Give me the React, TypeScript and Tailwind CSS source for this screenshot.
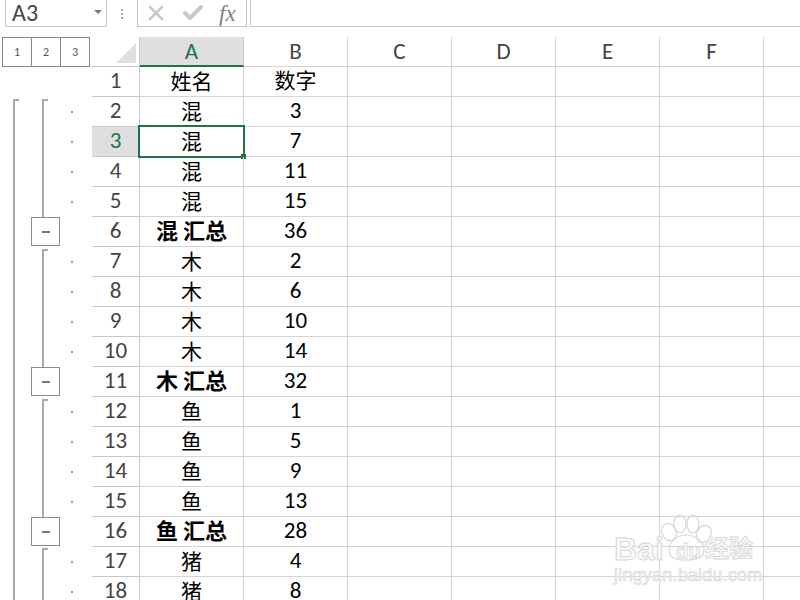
import React from 'react';
import { Check, X } from 'lucide-react';

const sans = "font-['Carlito','Open_Sans','Noto_Sans','Noto_Sans_CJK_SC',sans-serif]";

const rows: { n: number; a: string; b: number; total?: boolean }[] = [
    { n: 1, a: '姓名', b: 0 },
    { n: 2, a: '混', b: 3 },
    { n: 3, a: '混', b: 7 },
    { n: 4, a: '混', b: 11 },
    { n: 5, a: '混', b: 15 },
    { n: 6, a: '混 汇总', b: 36, total: true },
    { n: 7, a: '木', b: 2 },
    { n: 8, a: '木', b: 6 },
    { n: 9, a: '木', b: 10 },
    { n: 10, a: '木', b: 14 },
    { n: 11, a: '木 汇总', b: 32, total: true },
    { n: 12, a: '鱼', b: 1 },
    { n: 13, a: '鱼', b: 5 },
    { n: 14, a: '鱼', b: 9 },
    { n: 15, a: '鱼', b: 13 },
    { n: 16, a: '鱼 汇总', b: 28, total: true },
    { n: 17, a: '猪', b: 4 },
    { n: 18, a: '猪', b: 8 },
];

const columns = ['A', 'B', 'C', 'D', 'E', 'F'];

// outline gutter, y runs from the top of row 1 (y = 67 on the page)
const OutlineGutter = () => {
    const gray = '#a9a9a9';
    const groups = [
        { top: 32, bottom: 150, box: 165 },
        { top: 182, bottom: 300, box: 315 },
        { top: 332, bottom: 450, box: 465 },
        { top: 481, bottom: 540 },
    ];
    const dots = [2, 3, 4, 5, 7, 8, 9, 10, 12, 13, 14, 15, 17, 18];
    return (
        <svg width="92" height="533" className="block">
            <path d="M19 33H14V533" fill="none" stroke={gray} strokeWidth="2" />
            {groups.map(g => (
                <g key={g.top}>
                    <path d={`M48 ${g.top + 1}H43V${g.bottom}`} fill="none" stroke={gray} strokeWidth="2" />
                    {g.box !== undefined && (
                        <g>
                            <rect x="31.5" y={g.box - 14.5} width="28" height="28" fill="#fff" stroke="#8a8a8f" />
                            <rect x="42" y={g.box - 1} width="8" height="2" fill="#777" />
                        </g>
                    )}
                </g>
            ))}
            {dots.map(n => (
                <rect key={n} x="71" y={(n - 1) * 30 + 14} width="2" height="2" fill="#999" />
            ))}
        </svg>
    );
};

const Watermark = () => (
    <div className="absolute left-[612px] top-[512px] w-[150px] h-[74px] pointer-events-none">
        <svg width="150" height="50" className="absolute left-0 top-0" fill="none" stroke="#d6d6d6" strokeWidth="1.2">
            <ellipse cx="57" cy="20" rx="7" ry="9" transform="rotate(-25 57 20)" />
            <ellipse cx="68" cy="12" rx="6" ry="9" />
            <ellipse cx="81" cy="12" rx="6" ry="9" />
            <ellipse cx="92" cy="22" rx="7" ry="9" transform="rotate(25 92 22)" />
            <path d="M57 38c0-9 9-15 17-15s18 6 18 15c0 7-6 10-18 10s-17-3-17-10z" />
        </svg>
        <span className="absolute left-[2px] top-[22px] text-[32px] leading-[30px] font-bold font-['Liberation_Sans',sans-serif] text-[#fafafa] [-webkit-text-stroke:1px_#d6d6d6]">Bai</span>
        <span className="absolute left-[64px] top-[29px] text-[20px] leading-[20px] font-bold font-['Liberation_Sans',sans-serif] text-[#fafafa] [-webkit-text-stroke:0.8px_#d6d6d6]">du</span>
        <span className="absolute left-[93px] top-[21px] text-[24px] leading-[28px] font-bold font-['Noto_Sans_CJK_SC',sans-serif] text-[#fafafa] [-webkit-text-stroke:0.8px_#d6d6d6]">经验</span>
        <span className="absolute left-[2px] top-[53px] text-[18px] leading-[20px] tracking-[0.2px] font-['Liberation_Sans',sans-serif] text-[#fafafa] [-webkit-text-stroke:0.7px_#d6d6d6]">jingyan.baidu.com</span>
    </div>
);

export default function App() {
    return (
        <div className={`relative w-[800px] h-[600px] overflow-hidden bg-white ${sans}`}>
            {/* Formula bar */}
            <div className="flex items-stretch h-[27px] pl-[5px]">
                <div className="w-[102px] flex items-center justify-between border-x border-b border-[#c6c6c6] pl-[6px] pr-[4px]">
                    <span className="text-[24px] leading-none text-[#444]">A3</span>
                    <span className="w-0 h-0 mb-[3px] border-x-[4px] border-x-transparent border-t-[4px] border-t-[#777]" />
                </div>
                <div className="w-[30px] flex flex-col items-center justify-center gap-[2px]">
                    <span className="w-[2px] h-[2px] bg-[#aaa]" />
                    <span className="w-[2px] h-[2px] bg-[#aaa]" />
                    <span className="w-[2px] h-[2px] bg-[#aaa]" />
                </div>
                <div className="w-[110px] flex items-center border-x border-b border-[#c6c6c6]">
                    <div className="w-[37px] pl-[6px]"><X size={24} strokeWidth={2.5} color="#c8c8c8" /></div>
                    <div className="w-[44px] pl-[6px]"><Check size={24} strokeWidth={4} color="#c8c8c8" /></div>
                    <span className="text-[23px] leading-none italic font-['Liberation_Serif',serif] text-[#808080]">fx</span>
                </div>
                <div className="flex-1 ml-[3px] border-l border-b border-[#c6c6c6]" />
            </div>

            <div className="flex mt-[10px]">
                {/* Outline levels and gutter */}
                <div className="w-[92px] shrink-0 bg-white">
                    <div className="flex h-[30px] pl-[2px]">
                        {[1, 2, 3].map(l => (
                            <div key={l} className="w-[30px] h-[30px] -mr-px flex items-center justify-center border border-[#85858a] text-[12px] text-[#555]">{l}</div>
                        ))}
                    </div>
                    <OutlineGutter />
                </div>

                {/* Sheet */}
                <div className="flex-1 min-w-0">
                    <div className="flex h-[30px]">
                        <div className="w-[48px] shrink-0 border-r border-b border-[#c6c6c6] flex items-end justify-end pr-[3px] pb-[3px]">
                            <div className="w-0 h-0 border-l-[20px] border-l-transparent border-b-[20px] border-b-[#dfdfdf]" />
                        </div>
                        {columns.map(c => (
                            <div
                                key={c}
                                className={c === 'A'
                                    ? 'w-[104px] shrink-0 flex items-center justify-center text-[23px] text-[#217346] bg-[#dfdfdf] border-r border-[#c6c6c6] border-b-2 border-b-[#217346]'
                                    : 'w-[104px] shrink-0 flex items-center justify-center text-[23px] text-[#444] border-r border-b border-[#d4d4d4]'}
                            >
                                {c}
                            </div>
                        ))}
                        <div className="flex-1 border-b border-[#d4d4d4]" />
                    </div>

                    {rows.map(r => (
                        <div key={r.n} className="flex h-[30px]">
                            <div className={r.n === 3
                                ? 'w-[48px] shrink-0 flex items-center justify-center pb-[2px] text-[23px] text-[#217346] bg-[#dfdfdf] border-r border-b border-[#c6c6c6]'
                                : 'w-[48px] shrink-0 flex items-center justify-center pb-[2px] text-[23px] text-[#444] border-r border-b border-[#c6c6c6]'}
                            >
                                {r.n}
                            </div>
                            <div className={`relative w-[104px] shrink-0 flex items-center justify-center border-r border-b border-[#d4d4d4] text-black ${r.total ? 'font-bold text-[22px]' : 'pt-[2px] text-[21px]'} ${r.n === 1 ? 'pt-0' : ''}`}>
                                {r.a}
                                {r.n === 3 && (
                                    <div className="absolute -left-[2px] -top-[2px] w-[107px] h-[33px] border-2 border-[#217346]">
                                        <div className="absolute -right-[3px] -bottom-[3px] w-[5px] h-[5px] bg-[#217346]" />
                                    </div>
                                )}
                            </div>
                            <div className={`w-[104px] shrink-0 flex items-center justify-center border-r border-b border-[#d4d4d4] text-black ${r.n === 1 ? 'text-[21px]' : 'pb-[2px] text-[23px]'}`}>
                                {r.n === 1 ? '数字' : r.b}
                            </div>
                            {columns.slice(2).map(c => (
                                <div key={c} className="w-[104px] shrink-0 border-r border-b border-[#d4d4d4]" />
                            ))}
                            <div className="flex-1 border-b border-[#d4d4d4]" />
                        </div>
                    ))}
                </div>
            </div>

            <Watermark />
        </div>
    );
}
